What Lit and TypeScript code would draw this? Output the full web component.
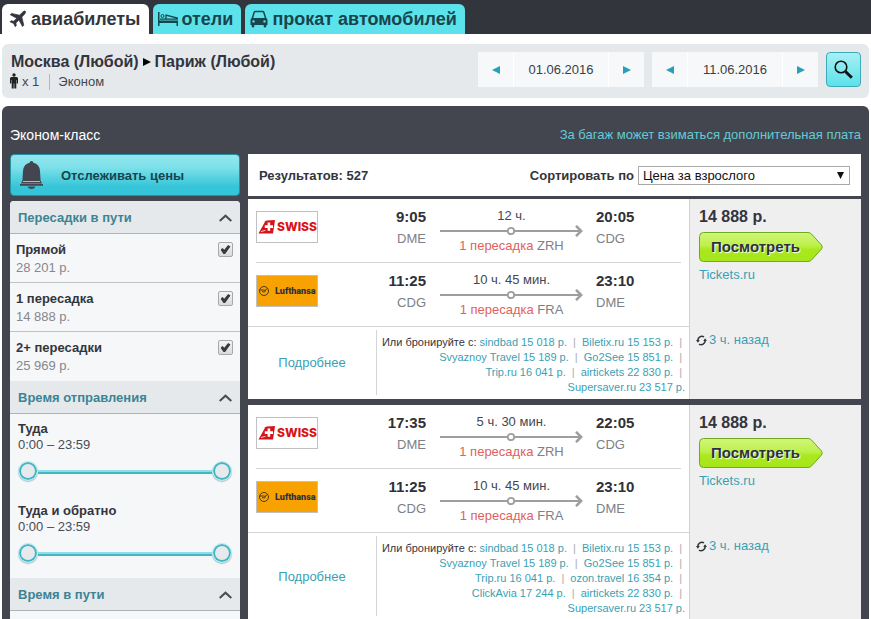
import { LitElement, html, css, svg } from "lit";
import { customElement, property } from "lit/decorators.js";

interface Leg {
  airline: "swiss" | "lufthansa";
  depart: string;
  from: string;
  duration: string;
  via: string;
  arrive: string;
  to: string;
}

interface Ticket {
  legs: Leg[];
  offers: string[];
}

const commonOffers = ["sindbad 15 018 р.", "Biletix.ru 15 153 р.", "Svyaznoy Travel 15 189 р.", "Go2See 15 851 р.", "Trip.ru 16 041 р."];

const tickets: Ticket[] = [
  {
    legs: [
      { airline: "swiss", depart: "9:05", from: "DME", duration: "12 ч.", via: "ZRH", arrive: "20:05", to: "CDG" },
      { airline: "lufthansa", depart: "11:25", from: "CDG", duration: "10 ч. 45 мин.", via: "FRA", arrive: "23:10", to: "DME" },
    ],
    offers: [...commonOffers, "airtickets 22 830 р.", "Supersaver.ru 23 517 р."],
  },
  {
    legs: [
      { airline: "swiss", depart: "17:35", from: "DME", duration: "5 ч. 30 мин.", via: "ZRH", arrive: "22:05", to: "CDG" },
      { airline: "lufthansa", depart: "11:25", from: "CDG", duration: "10 ч. 45 мин.", via: "FRA", arrive: "23:10", to: "DME" },
    ],
    offers: [...commonOffers, "ozon.travel 16 354 р.", "ClickAvia 17 244 р.", "airtickets 22 830 р.", "Supersaver.ru 23 517 р."],
  },
];

const stops = [
  { name: "Прямой", price: "28 201 р." },
  { name: "1 пересадка", price: "14 888 р." },
  { name: "2+ пересадки", price: "25 969 р." },
];

const base = css`
  *, *::before, *::after { box-sizing: border-box; }
  a { color: #3b9fb3; text-decoration: none; }
  button, input, select { font: inherit; color: inherit; margin: 0; }
  button { cursor: pointer; padding: 0; }
  svg { display: block; flex: none; }
`;

@customElement("top-tabs")
class TopTabs extends LitElement {
  static styles = [base, css`
    :host { display: block; background: #33353d; }
    .tabs { display: flex; gap: 4px; padding: 4px 2px 0; }
    .tab {
      display: flex; align-items: center; gap: 4px; height: 30px; padding: 0 8px 0 5px;
      border-radius: 6px 6px 0 0; background: #5ce2ea; color: #17454d;
      font-size: 18px; font-weight: bold; line-height: 30px; white-space: nowrap;
    }
    .active { background: #fff; color: #33353d; gap: 5px; padding-left: 7px; }
  `];
  render() {
    return html`<nav class="tabs">
      <a class="tab active" href="#flights">
        <svg width="17" height="18" viewBox="0 0 17 18"><path fill="#33353d" stroke="#33353d" stroke-width=".7" d="M16.3 1.2c.6.8 0 2.2-1 3.200l-2.500 2.600 2 8.200-1.300 1.300-3.600-6.500-3 3 .4 2.700-1 1-1.700-3.300L1 11.800l1-1 2.700.4 3-3L1.200 4.700 2.500 3.400l8.100 1.800 2.600-2.700c1-1 2.500-1.900 3.100-1.300z"/></svg>
        авиабилеты</a>
      <a class="tab" href="#hotels">
        <svg width="20" height="16" viewBox="0 0 20 16"><path fill="#17454d" d="M0 1h1.500v8.500H20V15h-1.500v-3h-17v3H0z"/><circle cx="4.500" cy="5" r="1.500" fill="none" stroke="#17454d"/><path fill="none" stroke="#17454d" stroke-width="1.300" d="M2 8.200h17.300V7L8 4.200V8"/></svg>
        отели</a>
      <a class="tab" href="#cars">
        <svg width="18" height="18" viewBox="0 0 18 18"><path fill="none" stroke="#17454d" stroke-width="1.500" d="M2.300 8.500 4.200 2.300Q4.500 1.500 5.500 1.500h7q1 0 1.300.8l1.900 6.200"/><path fill="#17454d" fill-rule="evenodd" d="M2 8h14q1.500.3 1.500 2v5h-1.200v1.500q0 1-1.300 1t-1.300-1V15H4.300v1.500q0 1-1.300 1t-1.300-1V15H.5v-5Q.5 8.300 2 8zm1.500 2.200a1.200 1.200 0 100 2.400 1.200 1.200 0 000-2.400zm11 0a1.200 1.200 0 100 2.400 1.200 1.200 0 000-2.400z"/></svg>
        прокат автомобилей</a>
    </nav>`;
  }
}

@customElement("search-bar")
class SearchBar extends LitElement {
  static styles = [base, css`
    :host { display: block; }
    .bar {
      display: flex; align-items: flex-start; gap: 8px; margin: 10px 2px 8px; padding: 8px 8px 6px;
      border-radius: 6px; background: #e6e9ec;
    }
    .route { flex: 1; white-space: nowrap; }
    .cities { display: flex; align-items: center; gap: 4px; margin: 0; font-size: 16px; line-height: 20px; color: #33353d; padding-left: 1px; }
    .pax { display: flex; align-items: center; gap: 4px; font-size: 13px; line-height: 20px; color: #44464f; }
    .class { border-left: 1px solid #b4b7bb; padding-left: 8px; margin-left: 6px; line-height: 16px; }
    .date { display: grid; grid-template-columns: 35px 96px 35px; height: 35px; background: #f6f8fa; }
    .arrow { border: 0; background: none; display: grid; place-items: center; }
    .day {
      width: 100%; border: solid #fff; border-width: 0 1px; border-radius: 0; background: none; padding: 0;
      text-align: center; font-size: 13px; color: #3c3e45;
    }
    .go {
      width: 35px; height: 35px; border: 1px solid #3fa9b8; border-radius: 4px; display: grid; place-items: center;
      background: linear-gradient(#a6f0f5, #5ce2ea);
    }
  `];
  private date(value: string, label: string) {
    return html`<div class="date">
      <button class="arrow" aria-label="Предыдущий день"><svg width="8" height="8" viewBox="0 0 8 8"><path fill="#26a0b2" d="M0 4 8 0v8z"/></svg></button>
      <input class="day" type="text" aria-label=${label} .value=${value}>
      <button class="arrow" aria-label="Следующий день"><svg width="8" height="8" viewBox="0 0 8 8"><path fill="#26a0b2" d="M8 4 0 0v8z"/></svg></button>
    </div>`;
  }
  render() {
    return html`<div class="bar">
      <div class="route">
        <h1 class="cities">Москва (Любой) <svg width="8" height="8" viewBox="0 0 8 8"><path d="M8 4 0 0v8z"/></svg> Париж (Любой)</h1>
        <div class="pax">
          <svg width="8" height="18" viewBox="0 0 8 18"><circle cx="4" cy="2" r="1.700" fill="#222"/><path fill="#222" d="M1.200 4h5.600L8 5v5.500H6.700V7h-.4v8.500h-2V10.500h-.6v5h-2V7h-.4v3.500H0V5z"/></svg>
          x 1 <span class="class">Эконом</span>
        </div>
      </div>
      ${this.date("01.06.2016", "Туда")}
      ${this.date("11.06.2016", "Обратно")}
      <button class="go" aria-label="Найти"><svg width="19" height="19" viewBox="0 0 19 19"><circle cx="7" cy="7" r="5.800" fill="none" stroke="#111" stroke-width="1.600"/><path stroke="#111" stroke-width="3" d="m11.500 11.500 6.300 6.300"/></svg></button>
    </div>`;
  }
}

@customElement("filter-panel")
class FilterPanel extends LitElement {
  static styles = [base, css`
    :host { display: flex; flex-direction: column; gap: 5px; }
    .track {
      display: flex; align-items: center; gap: 17px; height: 42px; padding: 0 8px; border: 1px solid #2490a0; border-radius: 4px;
      background: linear-gradient(#92e6ee, #7fe1ea 30%, #35c5d8 80%, #35c5d8);
      font-size: 13px; font-weight: bold; color: #17454d;
    }
    .panel { flex: 1; border-radius: 4px 4px 0 0; background: #f5f7f9; overflow: hidden; }
    .head {
      display: flex; justify-content: space-between; align-items: center; width: 100%; height: 33px; padding: 0 8px;
      border: 0; border-bottom: 1px solid #aeb3b8; background: #e6e9ec;
      font-size: 13px; font-weight: bold; color: #3b8494;
    }
    .stop { display: flex; justify-content: space-between; height: 49px; padding: 7px 7px 0 6px; border-bottom: 1px solid #bfc3c7; font-size: 13px; line-height: 18px; }
    .plain { border-bottom: 0; }
    .text { display: flex; flex-direction: column; }
    .name { font-weight: bold; color: #33353d; }
    .price { color: #85888d; }
    .box {
      appearance: none; display: grid; place-items: center; width: 15px; height: 15px; margin-top: 1px;
      border: 1px solid #a6a8aa; border-radius: 2px; background: linear-gradient(#f4f4f4, #dadada);
    }
    .box:checked::before {
      content: ""; width: 10px; height: 9px; background: #3a3a3c;
      clip-path: polygon(0 52%, 20% 34%, 38% 52%, 76% 0, 100% 16%, 46% 100%, 30% 100%);
    }
    .period { padding: 7px 8px 15px; font-size: 13px; line-height: 16px; color: #4a4c53; }
    .slider { display: grid; height: 20px; margin-top: 8px; align-items: center; }
    .slider::before { content: ""; grid-area: 1 / 1; height: 4px; margin: 1px 20px 0; background: linear-gradient(#8fdde5 50%, #41b7c6 50%); }
    .range { grid-area: 1 / 1; appearance: none; width: 100%; height: 20px; background: none; pointer-events: none; }
    .range::-webkit-slider-thumb {
      appearance: none; pointer-events: auto; width: 20px; height: 20px; border-radius: 50%;
      border: 1px solid #b5edf2; background: #e7eaec; box-shadow: inset 0 0 0 2px #41b7c6, 0 1px 1px #b4bcc1;
    }
  `];
  private head(title: string) {
    return html`<button class="head" aria-expanded="true">${title}
      <svg width="13" height="9" viewBox="0 0 13 9"><path fill="none" stroke="#4a4c50" stroke-width="2" d="M.7 8 6.500 2.700 12.300 8"/></svg></button>`;
  }
  private period(title: string) {
    return html`<div class="period">
      <div class="name">${title}</div>
      <div>0:00 – 23:59</div>
      <div class="slider">
        <input class="range" type="range" min="0" max="1439" .value=${"0"} aria-label="${title}: не раньше">
        <input class="range" type="range" min="0" max="1439" .value=${"1439"} aria-label="${title}: не позже">
      </div>
    </div>`;
  }
  render() {
    return html`
      <button class="track">
        <svg width="25" height="28" viewBox="0 0 25 28"><path fill="#44464f" d="M12.500 0q1.800 0 1.900 1.800 6.100 1.300 6.600 8.200l.6 9.500 1.400 3H2l1.400-3L4 10q.5-6.900 6.600-8.200Q10.700 0 12.500 0z"/><path fill="#44464f" d="M1 23h23v1.800H1zM8.500 25.500h8q-1 2.500-4 2.500t-4-2.500z"/><path stroke="#6dd9e3" d="M4 20.500h17"/></svg>
        Отслеживать цены
      </button>
      <div class="panel">
        ${this.head("Пересадки в пути")}
        ${stops.map((s, i) => html`<label class="stop ${i === stops.length - 1 ? "plain" : ""}">
          <span class="text"><span class="name">${s.name}</span><span class="price">${s.price}</span></span>
          <input class="box" type="checkbox" checked>
        </label>`)}
        ${this.head("Время отправления")}
        ${this.period("Туда")}
        ${this.period("Туда и обратно")}
        ${this.head("Время в пути")}
      </div>`;
  }
}

const swissLogo = svg`<svg width="60" height="30" viewBox="0 0 60 30" role="img" aria-label="SWISS">
  <path fill="#fff" d="M0 0h60v30H0z"/>
  <path fill="#d8121a" d="M1.500 21.500 8.300 9.200Q8.800 8.500 10 8.400L18 8l-2 13.500z"/>
  <path stroke="#fff" stroke-width=".8" d="m4 19.500 4.500-1.200"/>
  <path fill="#fff" d="M10.600 10.500h2.600v2.800H16v2.600h-2.800v2.800h-2.600v-2.800H7.800v-2.600h2.800z"/>
  <text x="20" y="19" font-family="Inter, sans-serif" font-weight="800" font-size="12" fill="#d8121a">SWISS</text></svg>`;

const lufthansaLogo = svg`<svg width="60" height="30" viewBox="0 0 60 30" role="img" aria-label="Lufthansa">
  <path fill="#f7a200" d="M0 0h60v30H0z"/>
  <circle cx="7" cy="15" r="4.500" fill="none" stroke="#4b3a22"/>
  <path fill="none" stroke="#4b3a22" d="M2.500 14h4q1 1.500 4-1.500M5 15.500q2.500 1.500 4-1"/>
  <text x="18" y="18" font-family="Roboto, sans-serif" font-weight="900" font-size="9" fill="#2e3142">Lufthansa</text></svg>`;

@customElement("ticket-card")
class TicketCard extends LitElement {
  @property({ attribute: false }) ticket!: Ticket;
  static styles = [base, css`
    :host { display: grid; grid-template-columns: 1fr 172px; background: #fff; }
    .leg {
      display: grid; grid-template-columns: 62px 1fr 143px 98px; height: 64px; margin: 0 8px; padding-top: 9px;
      border-bottom: 1px solid #d3d5d7; font-size: 13px; line-height: 18px;
    }
    .last { margin: 0; padding-left: 8px; padding-right: 8px; }
    .logo { height: 32px; margin-top: 3px; border: 1px solid #bfc1c4; }
    .point { display: flex; flex-direction: column; gap: 4px; color: #7d8087; }
    .from { text-align: right; padding-right: 14px; }
    .to { padding-left: 13px; }
    .time { font-size: 15px; font-weight: bold; color: #2f3138; }
    .way { display: flex; flex-direction: column; align-items: center; margin-top: -1px; color: #44464f; white-space: nowrap; }
    .line { width: 100%; }
    .via { color: #7d8087; }
    .red { color: #e0625c; }
    .bottom { display: grid; grid-template-columns: 129px 1fr; }
    .details { display: grid; place-items: center; margin: 3px 0 4px; border-right: 1px solid #d3d5d7; font-size: 13px; }
    .offers { padding: 8px 4px 4px 0; text-align: right; font-size: 11px; line-height: 15px; color: #33353d; }
    .offer { white-space: nowrap; }
    .sep { color: #a9abae; margin: 0 3px; }
    .buy { border-left: 1px solid #cfd1d3; background: #efefef; font-size: 13px; line-height: 18px; padding-left: 6px; }
    .deal { display: flex; flex-direction: column; align-items: flex-start; gap: 4px; height: 132px; padding: 7px 0 0 3px; }
    .sum { font-size: 16px; font-weight: bold; line-height: 22px; color: #33353d; }
    .look {
      display: grid; width: 124px; height: 30px; border: 0; background: none; align-items: center;
      font-size: 15px; font-weight: bold; color: #2f3138; text-align: left;
    }
    .look > * { grid-area: 1 / 1; }
    .caption { padding-left: 12px; text-shadow: 1px 1px 1px #fff; }
    .age { display: flex; align-items: center; gap: 2px; }
  `];
  private leg(l: Leg, last: boolean) {
    return html`<div class="leg ${last ? "last" : ""}">
      <div class="logo">${l.airline === "swiss" ? swissLogo : lufthansaLogo}</div>
      <div class="point from"><span class="time">${l.depart}</span><span>${l.from}</span></div>
      <div class="way">
        <span>${l.duration}</span>
        <svg class="line" height="12" viewBox="0 0 143 12"><path fill="none" stroke="#9c9ea2" stroke-width="2" d="M0 6h67M75 6h66"/><path fill="none" stroke="#9c9ea2" stroke-width="2.500" d="m136 .8 5.200 5.200-5.200 5.200"/><circle cx="71" cy="6" r="3.200" fill="#fff" stroke="#9c9ea2" stroke-width="1.800"/></svg>
        <span class="via"><span class="red">1 пересадка</span> ${l.via}</span>
      </div>
      <div class="point to"><span class="time">${l.arrive}</span><span>${l.to}</span></div>
    </div>`;
  }
  render() {
    const { legs, offers } = this.ticket;
    return html`
      <div>
        ${legs.map((l, i) => this.leg(l, i === legs.length - 1))}
        <div class="bottom">
          <div class="details"><a href="#details">Подробнее</a></div>
          <div class="offers">Или бронируйте с:
            ${offers.map((o, i) => html`<span class="offer"><a href="#offer">${o}</a>${i < offers.length - 1 ? html` <span class="sep">|</span>` : ""}</span> `)}
          </div>
        </div>
      </div>
      <div class="buy">
        <div class="deal">
          <span class="sum">14 888 р.</span>
          <button class="look">
            <svg width="124" height="30" viewBox="0 0 124 30"><defs><linearGradient id="g" x2="0" y2="1"><stop offset="0" stop-color="#d2f57c"/><stop offset=".45" stop-color="#bdf04a"/><stop offset=".6" stop-color="#a8e81c"/><stop offset="1" stop-color="#a6e61a"/></linearGradient></defs><path fill="url(#g)" stroke="#6cab1e" d="M4.500.5H109q2 0 3.500 1.500l10 11q1.500 2 0 4l-10 11q-1.500 1.500-3.500 1.500H4.500q-4 0-4-4v-21q0-4 4-4z"/></svg>
            <span class="caption">Посмотреть</span>
          </button>
          <a href="#tickets">Tickets.ru</a>
        </div>
        <a class="age" href="#refresh"><svg width="11" height="11" viewBox="0 0 11 11"><path fill="none" stroke="#33353d" stroke-width="1.600" d="M8 1.900A4.100 4.100 0 0 0 1.800 5.500M3 9.100A4.100 4.100 0 0 0 9.200 5.500"/><path fill="#33353d" d="M0 5h3.800L1.900 7.800zM11 6H7.200l1.900-2.800z"/></svg>3 ч. назад</a>
      </div>`;
  }
}

@customElement("app-root")
class AppRoot extends LitElement {
  static styles = [base, css`
    :host { display: block; font-family: "Liberation Sans", Arial, sans-serif; background: #fff; }
    .main { margin: 0 2px; padding: 0 8px; border-radius: 6px 6px 0 0; background: #44464f; }
    .title { display: flex; justify-content: space-between; padding: 19px 0 9px; line-height: 20px; font-size: 14px; color: #fff; }
    .baggage { color: #63cbd6; font-size: 13px; }
    .columns { display: grid; grid-template-columns: 230px 1fr; gap: 8px; }
    .results { display: flex; flex-direction: column; gap: 6px; }
    .sortbar {
      display: flex; justify-content: space-between; align-items: center; height: 42px; margin-bottom: -3px; padding: 0 11px;
      background: #fff; font-size: 13px; font-weight: bold; color: #33353d;
    }
    .sort { display: flex; align-items: center; gap: 4px; }
    .pick { display: grid; align-items: center; font-weight: normal; color: #111; }
    .pick > * { grid-area: 1 / 1; }
    .select { appearance: none; width: 212px; height: 19px; border: 1px solid #a9a9a9; border-radius: 0; background: #fff; padding: 0 4px; font-size: 13px; }
    .caret { justify-self: end; margin-right: 6px; pointer-events: none; }
  `];
  render() {
    return html`
      <top-tabs></top-tabs>
      <search-bar></search-bar>
      <main class="main">
        <div class="title"><span>Эконом-класс</span><a class="baggage" href="#baggage">За багаж может взиматься дополнительная плата</a></div>
        <div class="columns">
          <filter-panel></filter-panel>
          <div class="results">
            <div class="sortbar">
              <span>Результатов: 527</span>
              <div class="sort"><label for="sort">Сортировать по</label>
                <span class="pick"><select class="select" id="sort"><option>Цена за взрослого</option></select>
                <svg class="caret" width="7" height="7" viewBox="0 0 7 7"><path fill="#111" d="M0 0h7L3.500 7z"/></svg></span>
              </div>
            </div>
            ${tickets.map((t) => html`<ticket-card .ticket=${t}></ticket-card>`)}
          </div>
        </div>
      </main>`;
  }
}
